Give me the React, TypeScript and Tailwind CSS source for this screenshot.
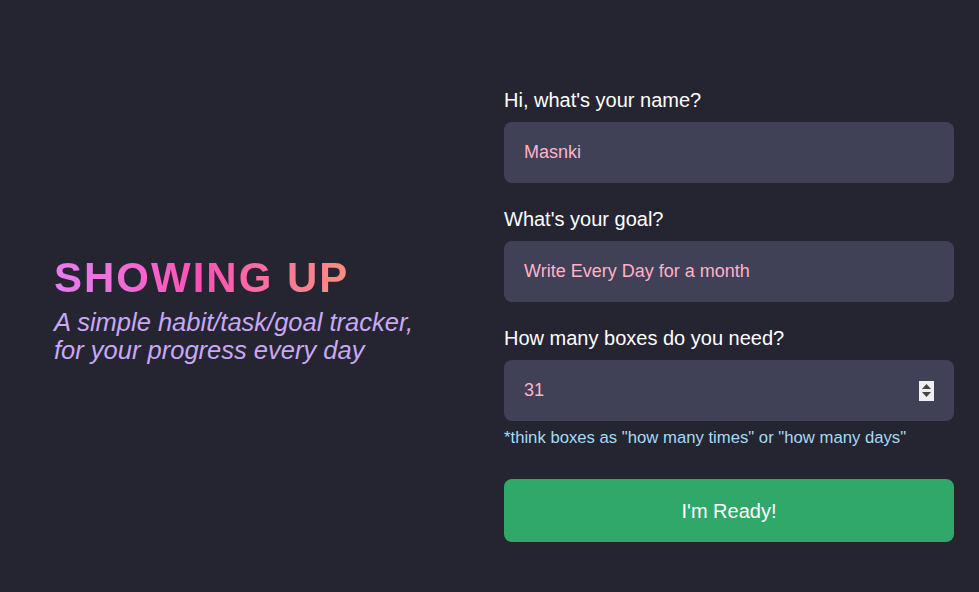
import React from 'react';

function Spinner() {
  return (
    <div className="absolute right-5 top-1/2 -translate-y-1/2 w-[15px] h-[20px] bg-[#efefef] flex flex-col items-center justify-center gap-[3px]">
      <svg width="9" height="5" viewBox="0 0 9 5"><path d="M4.5 0 L9 5 L0 5 Z" fill="#444" /></svg>
      <svg width="9" height="5" viewBox="0 0 9 5"><path d="M0 0 L9 0 L4.5 5 Z" fill="#444" /></svg>
    </div>
  );
}

export default function App() {
  return (
    <div className="h-screen w-full bg-[#252532] flex items-center pt-[28px] font-['Liberation_Sans',Arial,sans-serif]">
      {/* hero */}
      <div className="w-[504px] pl-[54px]">
        <h1 className="text-[42px] font-bold leading-none tracking-[2px] bg-gradient-to-r from-[#e47ef2] via-[#ff4fb4] to-[#fb8e7c] bg-clip-text text-transparent w-fit">
          SHOWING UP
        </h1>
        <p className="mt-[9px] text-[25.5px] italic leading-[28px] text-[#c9a8f5]">
          A simple habit/task/goal tracker,
          <br />
          for your progress every day
        </p>
      </div>

      {/* form */}
      <form className="w-[450px] flex flex-col pt-[10px]" onSubmit={(e) => e.preventDefault()}>
        <label className="text-[20px] text-white leading-[24px]">Hi, what's your name?</label>
        <input
          className="mt-[10px] h-[61px] rounded-lg bg-[#404057] px-5 text-[18px] text-[#ffb3c7] outline-none"
          defaultValue="Masnki"
        />

        <label className="mt-[24px] text-[20px] text-white leading-[24px]">What's your goal?</label>
        <input
          className="mt-[10px] h-[61px] rounded-lg bg-[#404057] px-5 text-[18px] text-[#ffb3c7] outline-none"
          defaultValue="Write Every Day for a month"
        />

        <label className="mt-[24px] text-[20px] text-white leading-[24px]">How many boxes do you need?</label>
        <div className="relative mt-[10px]">
          <input
            className="w-full h-[61px] rounded-lg bg-[#404057] px-5 text-[18px] text-[#ffb3c7] outline-none"
            defaultValue="31"
          />
          <Spinner />
        </div>
        <p className="mt-[7px] text-[16.7px] text-[#a3dcf3] leading-[20px]">
          *think boxes as "how many times" or "how many days"
        </p>

        <button
          type="submit"
          className="mt-[31px] h-[63px] rounded-lg bg-[#2fa86a] text-white text-[20px]"
        >
          I'm Ready!
        </button>
      </form>
    </div>
  );
}
